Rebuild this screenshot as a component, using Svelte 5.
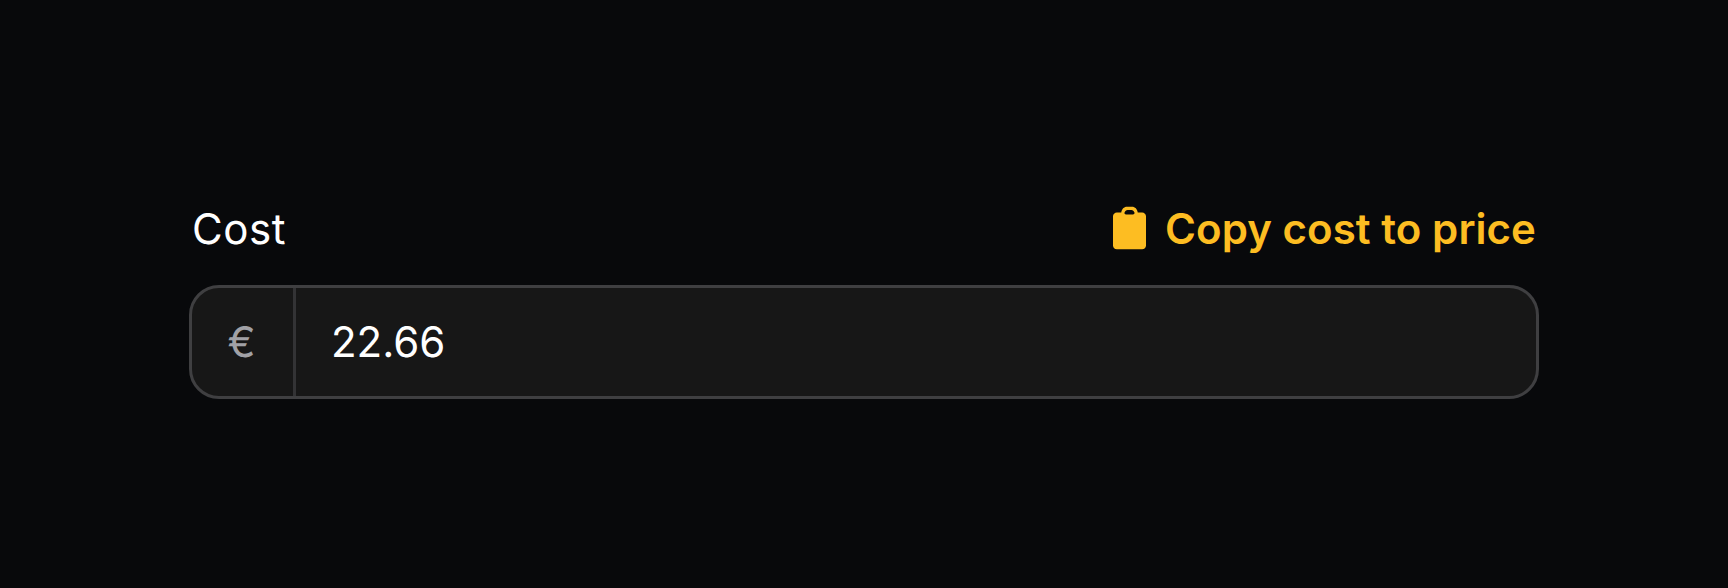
<script lang="ts">
  let cost = "22.66";
</script>

<main class="page">
  <div class="field">
    <div class="field-head">
      <span class="label">Cost</span>
      <button class="copy" type="button">
        <svg class="copy-icon" viewBox="0 0 34 44" aria-hidden="true">
          <path
            fill-rule="evenodd"
            d="M8.500 6C9 2.400 11.200 0 14.500 0h5c3.300 0 5.500 2.400 6 6H30c2.200 0 4 1.800 4 4v30c0 2.200-1.800 4-4 4H4c-2.200 0-4-1.800-4-4V10c0-2.200 1.800-4 4-4h4.500ZM13.500 8h7c1.300 0 2-.8 1.600-1.900C21.500 4.400 20.400 3.500 19 3.500h-4c-1.400 0-2.500.9-3.100 2.600C11.500 7.200 12.200 8 13.500 8Z"
          />
        </svg>
        Copy cost to price
      </button>
    </div>
    <div class="input">
      <span class="addon">€</span>
      <span class="value">{cost}</span>
    </div>
  </div>
</main>

<style>
  :global(body) {
    margin: 0;
    background: #08090b;
  }

  .page {
    box-sizing: border-box;
    height: 588px;
    padding: 0 189px;
    display: flex;
    align-items: center;
    font-family: Inter, "Liberation Sans", sans-serif;
    text-rendering: geometricPrecision;
  }

  .field {
    width: 100%;
    display: flex;
    flex-direction: column;
    gap: 16px;
  }

  .field-head {
    display: flex;
    align-items: center;
    justify-content: space-between;
  }

  .label {
    font-size: 42px;
    line-height: 78px;
    font-weight: 400;
    color: #ffffff;
    padding: 2px 0 0 3px;
    letter-spacing: 0.6px;
  }

  .copy {
    display: flex;
    align-items: center;
    gap: 19px;
    padding: 0 3px 0 0;
    border: 0;
    background: none;
    font: inherit;
    font-size: 42px;
    line-height: 80px;
    font-weight: 600;
    letter-spacing: 0.06px;
    color: #fdbd22;
  }

  .copy-icon {
    width: 33px;
    height: 44px;
    margin-top: -2px;
    fill: #fdbd22;
  }

  .input {
    box-sizing: border-box;
    height: 114px;
    display: flex;
    border: 3px solid #3f3f41;
    border-radius: 30px;
    background: #171717;
    overflow: hidden;
  }

  .addon {
    box-sizing: border-box;
    width: 104px;
    padding-right: 2px;
    display: flex;
    align-items: center;
    justify-content: center;
    border-right: 3px solid #333335;
    font-size: 42px;
    color: #a1a1a6;
  }

  .value {
    display: flex;
    align-items: center;
    padding-left: 35px;
    font-size: 42px;
    font-weight: 380;
    color: #ffffff;
  }
</style>
